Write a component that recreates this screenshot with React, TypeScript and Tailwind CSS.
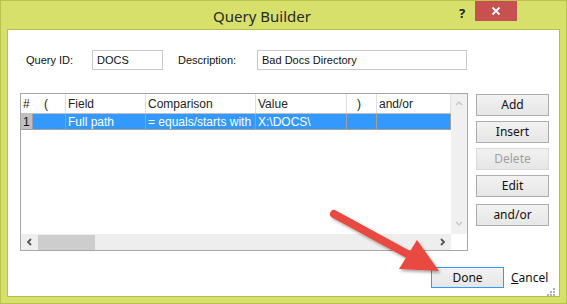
import React from "react";

const cols = [
  { w: "w-[12px]", h: "#", v: "1" },
  { w: "w-[33px]", h: "(", v: "" },
  { w: "w-[80px]", h: "Field", v: "Full path" },
  { w: "w-[110px]", h: "Comparison", v: "= equals/starts with" },
  { w: "w-[91px]", h: "Value", v: "X:\\DOCS\\" },
  { w: "w-[30px]", h: ")", v: "" },
  { w: "w-[74px]", h: "and/or", v: "" },
];

function Chevron({ dir }: { dir: "up" | "down" | "left" | "right" }) {
  const d = {
    up: "M1 5 L4 2 L7 5",
    down: "M1 2 L4 5 L7 2",
    left: "M5 1 L2 4 L5 7",
    right: "M2 1 L5 4 L2 7",
  }[dir];
  const dark = dir === "left" || dir === "right";
  return (
    <svg width="8" height="8" viewBox="0 0 8 8">
      <path d={d} fill="none" stroke={dark ? "#555" : "#c2c2c2"} strokeWidth={dark ? 1.8 : 1.2} />
    </svg>
  );
}

function Btn({ label, disabled }: { label: string; disabled?: boolean }) {
  return (
    <div
      className={`h-[22px] w-[73px] flex items-center justify-center border text-[12px] bg-gradient-to-b from-[#f2f2f2] to-[#e6e6e6] ${
        disabled ? "border-[#d9d9d9] text-[#a0a0a0]" : "border-[#acacac] text-[#111]"
      }`}
    >
      {label}
    </div>
  );
}

export default function App() {
  return (
    <div className="w-[567px] h-[304px] bg-[#d6e06a] border border-[#b9c44d] flex flex-col overflow-hidden relative" style={{ fontFamily: "'Noto Sans', 'Open Sans', sans-serif" }}>
      {/* Title bar */}
      <div className="h-[28px] flex items-start relative">
        <div className="flex-1 text-center pt-[4px] pl-[64px] text-[15px] text-[#2a2a2a]">Query Builder</div>
        <div className="w-[16px] pt-[3px] text-[13px] font-bold text-[#222]">?</div>
        <div className="w-[42px] h-[20px] bg-[#c75050] mr-[49px] flex items-center justify-center">
          <svg width="10" height="10" viewBox="0 0 10 10">
            <path d="M1.5 1.5 L8.5 8.5 M8.5 1.5 L1.5 8.5" stroke="#fff" strokeWidth="1.8" />
          </svg>
        </div>
      </div>

      {/* Client area */}
      <div className="ml-[6px] w-[553px] h-[268px] border border-[#b4bf4c] bg-white text-[12px] text-[#111] flex flex-col">
        {/* Fields */}
        <div className="flex items-center pt-[20px] h-[40px] text-[11px] font-['Liberation_Sans',sans-serif]">
          <div className="ml-[18px] w-[66px]">Query ID:</div>
          <div className="w-[71px] h-[20px] border border-[#c8c8c8] pl-[4px] flex items-center">DOCS</div>
          <div className="ml-[15px] w-[79px]">Description:</div>
          <div className="w-[210px] h-[20px] border border-[#c8c8c8] pl-[4px] flex items-center">Bad Docs Directory</div>
        </div>

        <div className="flex mt-[23px]">
          {/* Grid */}
          <div className="ml-[12px] w-[448px] h-[158px] border border-[#a8a8a8] flex flex-col font-['Liberation_Sans',sans-serif]">
            <div className="flex flex-1 min-h-0">
              <div className="w-[430px] flex flex-col">
                <div className="flex h-[20px] border-b border-[#c0c0c0]">
                  {cols.map((c, i) => (
                    <div key={i} className={`${c.w} pl-[2px] flex items-center border-r ${i === 0 ? "border-transparent" : "border-[#e0e0e0]"} text-[12px] text-[#222]`}>
                      {c.h === "(" ? <span className="pl-[9px]">(</span> : c.h === ")" ? <span className="pl-[8px]">)</span> : c.h}
                    </div>
                  ))}
                </div>
                <div className="flex h-[16px] border-b border-[#a0a0a0]">
                  {cols.map((c, i) => (
                    <div
                      key={i}
                      className={`${c.w} pl-[2px] flex items-center overflow-hidden whitespace-nowrap border-r border-[#a0a0a0] text-[12px] ${
                        i === 0 ? "bg-[#c0c0c0] text-[#111]" : "bg-[#3399ff] text-white"
                      }`}
                    >
                      {c.v}
                    </div>
                  ))}
                </div>
              </div>
              <div className="w-[17px] bg-[#f0f0f0] flex flex-col items-center justify-between py-[6px]">
                <Chevron dir="up" />
                <Chevron dir="down" />
              </div>
            </div>
            <div className="h-[16px] flex">
              <div className="w-[430px] bg-[#eeeeee] flex items-center">
                <div className="w-[17px] flex justify-center">
                  <Chevron dir="left" />
                </div>
                <div className="w-[57px] h-[15px] bg-[#cdcdcd]" />
                <div className="flex-1" />
                <div className="w-[17px] flex justify-center">
                  <Chevron dir="right" />
                </div>
              </div>
              <div className="flex-1 bg-white" />
            </div>
          </div>

          {/* Buttons */}
          <div className="ml-[8px] flex flex-col gap-[5px] pt-[1px]">
            <Btn label="Add" />
            <Btn label="Insert" />
            <Btn label="Delete" disabled />
            <Btn label="Edit" />
            <div className="mt-[2px]">
              <Btn label="and/or" />
            </div>
          </div>
        </div>

        {/* Bottom buttons */}
        <div className="flex items-center mt-[16px] relative">
          <div className="ml-[423px] w-[73px] h-[21px] border border-[#3399ff] bg-gradient-to-b from-[#f2f2f2] to-[#e6e6e6] flex items-center justify-center text-[12px]">
            Done
          </div>
          <div className="ml-[7px] text-[12px]">
            <span className="underline">C</span>ancel
          </div>
        </div>
        <div className="flex justify-end pr-[4px]">
          <svg width="8" height="8" viewBox="0 0 8 8">
            <g fill="#b0b0b0">
              <rect x="6" y="0" width="2" height="2" />
              <rect x="3" y="3" width="2" height="2" />
              <rect x="6" y="3" width="2" height="2" />
              <rect x="0" y="6" width="2" height="2" />
              <rect x="3" y="6" width="2" height="2" />
              <rect x="6" y="6" width="2" height="2" />
            </g>
          </svg>
        </div>
      </div>

      {/* Red callout arrow */}
      <svg className="absolute left-0 top-0 pointer-events-none" width="567" height="304" viewBox="0 0 567 304">
        <defs>
          <filter id="sh" x="-20%" y="-20%" width="140%" height="140%">
            <feDropShadow dx="1.5" dy="2" stdDeviation="1.5" floodColor="#000" floodOpacity="0.35" />
          </filter>
        </defs>
        <g filter="url(#sh)">
          <line x1="333" y1="213" x2="410" y2="255" stroke="#e8493f" strokeWidth="8" strokeLinecap="round" />
          <polygon points="438,270 398,268 416,239" fill="#e8493f" />
        </g>
      </svg>
    </div>
  );
}
